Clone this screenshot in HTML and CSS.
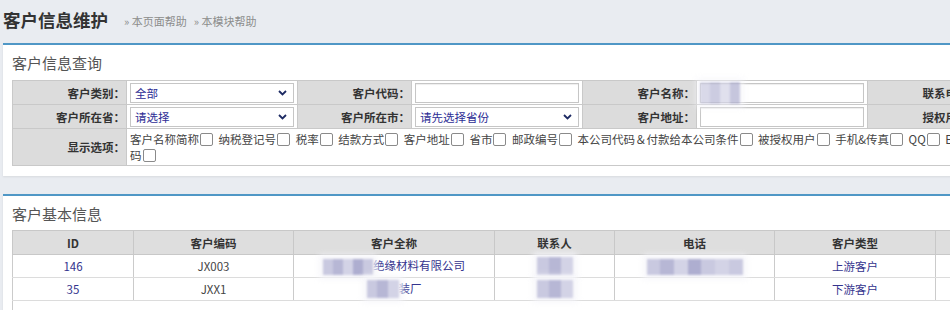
FILE: index.html
```html
<!DOCTYPE html>
<html lang="zh-CN">
<head>
<meta charset="utf-8">
<title>客户信息维护</title>
<link rel="stylesheet" href="styles.css">
</head>
<body>
<div class="head">
  <h1>客户信息维护</h1>
  <div class="help"><a>» 本页面帮助</a><a>» 本模块帮助</a></div>
</div>

<section class="panel panel-query">
  <h2>客户信息查询</h2>
  <table class="query">
    <colgroup>
      <col class="c-label"><col class="c-field"><col class="c-label"><col class="c-field">
      <col class="c-label"><col class="c-field"><col class="c-label"><col class="c-field">
    </colgroup>
    <tr>
      <td class="lbl">客户类别<span class="colon">：</span></td>
      <td><div class="sel"><span>全部</span><svg width="9" height="6" viewBox="0 0 9 6"><path d="M1 1l3.5 3.5L8 1" fill="none" stroke="#1d2a63" stroke-width="1.8"/></svg></div></td>
      <td class="lbl">客户代码<span class="colon">：</span></td>
      <td><div class="inp"></div></td>
      <td class="lbl">客户名称<span class="colon">：</span></td>
      <td><div class="inp"><span class="mask m-name"><i></i><i></i><i></i><i></i></span></div></td>
      <td class="lbl">联系电话<span class="colon">：</span></td>
      <td><div class="inp"></div></td>
    </tr>
    <tr>
      <td class="lbl">客户所在省<span class="colon">：</span></td>
      <td><div class="sel"><span>请选择</span><svg width="9" height="6" viewBox="0 0 9 6"><path d="M1 1l3.5 3.5L8 1" fill="none" stroke="#1d2a63" stroke-width="1.8"/></svg></div></td>
      <td class="lbl">客户所在市<span class="colon">：</span></td>
      <td><div class="sel"><span>请先选择省份</span><svg width="9" height="6" viewBox="0 0 9 6"><path d="M1 1l3.5 3.5L8 1" fill="none" stroke="#1d2a63" stroke-width="1.8"/></svg></div></td>
      <td class="lbl">客户地址<span class="colon">：</span></td>
      <td><div class="inp"></div></td>
      <td class="lbl">授权用户<span class="colon">：</span></td>
      <td><div class="inp"></div></td>
    </tr>
    <tr class="opt-row">
      <td class="lbl">显示选项<span class="colon">：</span></td>
      <td colspan="7" class="opts"><span class="line1">客户名称简称<span class="cb"></span> 纳税登记号<span class="cb"></span> 税率<span class="cb"></span> 结款方式<span class="cb"></span> 客户地址<span class="cb"></span> 省市<span class="cb"></span> 邮政编号<span class="cb"></span> 本公司代码＆付款给本公司条件<span class="cb"></span> 被授权用户<span class="cb"></span> 手机&amp;传真<span class="cb"></span> QQ<span class="cb"></span> EMAIL及客户识别编</span>码<span class="cb"></span></td>
    </tr>
  </table>
</section>

<section class="panel panel-list">
  <h2>客户基本信息</h2>
  <table class="grid">
    <colgroup>
      <col class="g-id"><col class="g-code"><col class="g-full"><col class="g-man">
      <col class="g-tel"><col class="g-type"><col class="g-more">
    </colgroup>
    <thead>
      <tr><th>ID</th><th>客户编码</th><th>客户全称</th><th>联系人</th><th>电话</th><th>客户类型</th><th>操作</th></tr>
    </thead>
    <tbody>
      <tr>
        <td class="link">146</td>
        <td>JX003</td>
        <td class="link"><span class="mask m-co1"><i></i><i></i><i></i><i></i><i></i></span>绝缘材料有限公司</td>
        <td><span class="mask m-man"><i></i><i></i><i></i></span></td>
        <td><span class="mask m-tel"><i></i><i></i><i></i><i></i><i></i><i></i><i></i></span></td>
        <td class="link">上游客户</td>
        <td></td>
      </tr>
      <tr>
        <td class="link">35</td>
        <td>JXX1</td>
        <td class="link"><span class="mask m-co2"><i></i><i></i><i></i></span>装厂</td>
        <td><span class="mask m-man"><i></i><i></i><i></i></span></td>
        <td></td>
        <td class="link">下游客户</td>
        <td></td>
      </tr>
      <tr class="foot"><td colspan="7"></td></tr>
    </tbody>
  </table>
</section>
</body>
</html>
```

FILE: styles.css
```css
html, body {
  margin: 0;
  overflow: hidden;
}
body {
  width: 950px;
  height: 310px;
  background: #e9ecf1;
  font-family: "Noto Sans CJK SC", "Noto Sans", sans-serif;
  font-size: 11.5px;
  color: #333;
}

.head {
  display: flex;
  align-items: center;
  height: 43px;
  padding: 0 0 4px 3px;
  box-sizing: border-box;
}
.head h1 {
  margin: 0;
  font-size: 17.5px;
  line-height: 24px;
  font-weight: bold;
  color: #333;
}
.help {
  display: flex;
  gap: 7px;
  margin: 2px 0 0 16px;
  font-size: 11px;
  color: #8c8c8c;
}

.panel {
  margin-left: 3px;
  width: 1200px;
  background: #fff;
  border-top: 2px solid #4f97c6;
  box-shadow: 0 1px 2px rgba(0, 0, 0, 0.08);
  padding: 0 0 10px 9px;
}
.panel h2 {
  margin: 8px 0 7px;
  font-size: 15px;
  line-height: 20px;
  font-weight: normal;
  color: #555;
}
.panel-list {
  margin-top: 18px;
  padding-bottom: 20px;
}
.panel-list h2 {
  margin: 8px 0 6px;
}

/* query table */
.query {
  border-collapse: collapse;
  table-layout: fixed;
  width: 1140px;
}
.c-label { width: 114px; }
.c-field { width: 171px; }
.query td {
  border: 1px solid #c9c9c9;
  height: 24px;
  padding: 0 3px;
  box-sizing: border-box;
}
.query td.lbl {
  background: #dcdcdc;
  text-align: right;
  font-weight: bold;
  color: #333;
  padding-right: 1px;
  white-space: nowrap;
}
.colon {
  font-family: "Noto Sans CJK JP", sans-serif;
}
.sel, .inp {
  display: flex;
  align-items: center;
  height: 20px;
  background: #fff;
  border: 1px solid #c6c6c6;
  box-sizing: border-box;
}
.sel {
  justify-content: space-between;
  padding: 0 6px 0 4px;
  color: #2d2d95;
}
.inp {
  box-shadow: inset 0 1px 1px #eee;
}
.opt-row td {
  height: 37px;
}
.query td.opts {
  line-height: 16px;
  color: #444;
  padding: 2px 260px 2px 3px;
}
.line1 {
  white-space: nowrap;
}
.cb {
  display: inline-block;
  width: 13px;
  height: 13px;
  border: 1px solid #8a8a8a;
  border-radius: 2px;
  background: #fff;
  box-sizing: border-box;
  vertical-align: -2px;
  margin: 0 3px 0 1px;
}

/* result grid */
.grid {
  border-collapse: collapse;
  table-layout: fixed;
  width: 1083px;
}
.g-id { width: 121px; }
.g-code { width: 160px; }
.g-full { width: 201px; }
.g-man { width: 120px; }
.g-tel { width: 160px; }
.g-type { width: 161px; }
.g-more { width: 160px; }
.grid th {
  background: #dedede;
  border: 1px solid #c8c8c8;
  height: 24px;
  padding: 0;
  font-weight: bold;
  color: #333;
  box-sizing: border-box;
}
.grid td {
  border-left: 1px solid #cbcbcb;
  border-right: 1px solid #cbcbcb;
  border-bottom: 1px solid #dcdcdc;
  height: 23px;
  padding: 0;
  text-align: center;
  color: #444;
  white-space: nowrap;
  box-sizing: border-box;
}
.grid td.link {
  color: #34348e;
}
.grid tr.foot td {
  height: 20px;
  border-bottom: none;
}

/* privacy masks */
.mask {
  display: inline-flex;
  vertical-align: middle;
  height: 16px;
  filter: blur(0.8px);
  box-shadow: 0 0 6px 4px rgba(245, 245, 250, 0.9);
  background: #f2f2f7;
}
.mask i {
  flex: 1;
  background: #c9c9e0;
}
.mask i:nth-child(2n) { background: #b7b7d5; }
.mask i:nth-child(3n) { background: #d3d3e6; }
.mask i:nth-child(4n) { background: #aeaed0; }
.m-name {
  width: 40px;
  height: 22px;
  margin-left: -1px;
  opacity: 0.7;
}
.m-co1 { width: 50px; }
.m-co2 { width: 32px; height: 18px; }
.m-man { width: 36px; height: 18px; }
.m-tel { width: 96px; }
```
